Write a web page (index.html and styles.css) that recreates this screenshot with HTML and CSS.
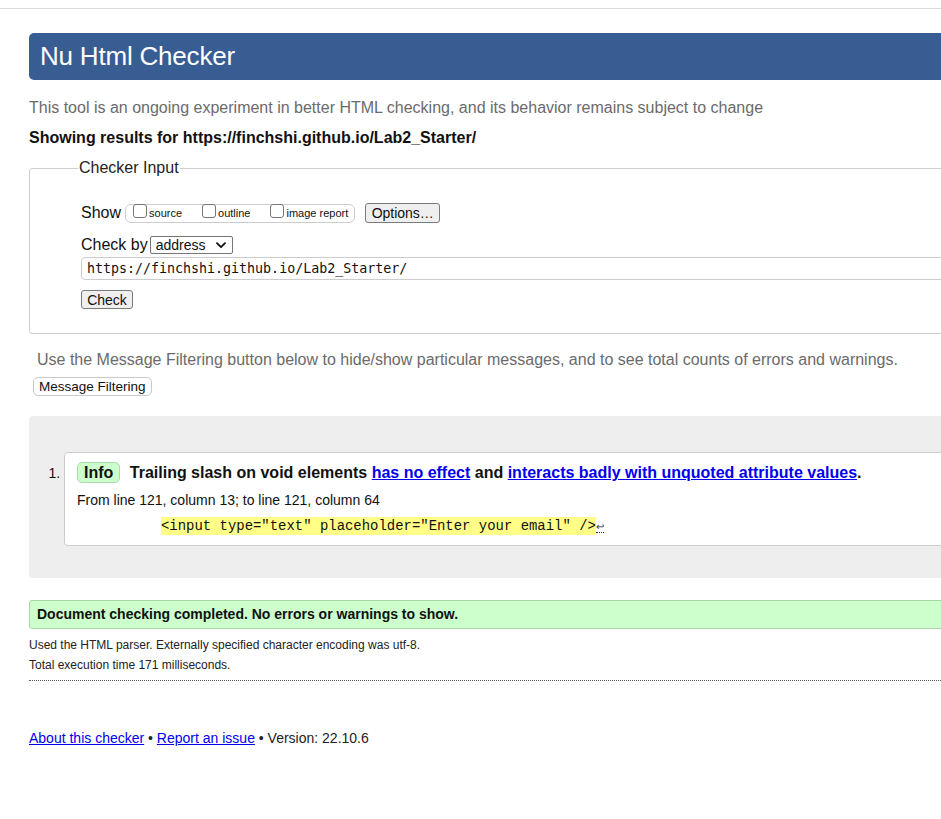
FILE: index.html
```html
<!DOCTYPE html>
<html lang="en">
<head>
<meta charset="utf-8">
<title>Nu Html Checker</title>
<link rel="stylesheet" href="styles.css">
</head>
<body>
<div class="topline"></div>
<div class="page">
  <h1 class="banner">Nu Html Checker</h1>
  <p class="intro">This tool is an ongoing experiment in better HTML checking, and its behavior remains subject to change</p>
  <p class="showing">Showing results for https://finchshi.github.io/Lab2_Starter/</p>

  <fieldset class="input">
    <legend class="legend">Checker Input</legend>
    <div class="rows">
      <div class="row">
        <span class="label">Show</span>
        <span class="showbox">
          <span class="opt"><span class="cb"></span>source</span>
          <span class="opt"><span class="cb"></span>outline</span>
          <span class="opt"><span class="cb"></span>image report</span>
        </span>
        <span class="btn btn-options">Options…</span>
      </div>
      <div class="row row-by">
        <span class="label">Check by</span>
        <span class="select">address
          <svg class="chev" width="10" height="7" viewBox="0 0 10 7"><path d="M1 1.2 L5 5.2 L9 1.2" fill="none" stroke="#111" stroke-width="1.8" stroke-linecap="round" stroke-linejoin="round"/></svg>
        </span>
      </div>
      <div class="url">https://finchshi.github.io/Lab2_Starter/</div>
      <span class="btn btn-check">Check</span>
    </div>
  </fieldset>

  <p class="filter-note">Use the Message Filtering button below to hide/show particular messages, and to see total counts of errors and warnings.</p>
  <span class="btn-filter">Message Filtering</span>

  <div class="results">
    <ol class="msgs">
      <li class="msg">
        <p class="msg-title"><span class="badge">Info</span> Trailing slash on void elements <a href="#">has no effect</a> and <a href="#">interacts badly with unquoted attribute values</a>.</p>
        <p class="loc">From line 121, column 13; to line 121, column 64</p>
        <p class="extract"><code class="hl">&lt;input type="text" placeholder="Enter your email" /&gt;</code><span class="lf">↩</span></p>
      </li>
    </ol>
  </div>

  <p class="success">Document checking completed. No errors or warnings to show.</p>
  <p class="stats">Used the HTML parser. Externally specified character encoding was utf-8.</p>
  <p class="stats">Total execution time 171 milliseconds.</p>
  <div class="dotted"></div>

  <p class="footer"><a href="#">About this checker</a> • <a href="#">Report an issue</a> • Version: 22.10.6</p>
</div>
</body>
</html>
```

FILE: styles.css
```css
html, body {
  margin: 0;
  padding: 0;
  overflow: hidden;
  background: #fff;
}
body {
  font-family: "Liberation Sans", Arial, sans-serif;
  color: #111;
  font-size: 16px;
}
.topline {
  height: 8px;
  border-bottom: 1px solid #dcdcdc;
}
.page {
  margin-left: 29px;
  margin-right: -80px;
}
.banner {
  margin: 24px 0 0;
  height: 47px;
  line-height: 47px;
  background: #385d93;
  color: #fff;
  font-size: 26px;
  font-weight: normal;
  padding-left: 11px;
  border-radius: 5px;
  letter-spacing: -0.2px;
}
.intro {
  margin: 19px 0 0;
  line-height: 18px;
  color: #6b6b6b;
  font-size: 16px;
}
.showing {
  margin: 12px 0 0;
  line-height: 18px;
  font-weight: bold;
  font-size: 16px;
  color: #111;
}
.input {
  margin: 12px 0 0;
  padding: 0 0 24px 0;
  border: 1px solid #cfcfcf;
  border-radius: 3px;
  min-width: 0;
}
.legend {
  margin-left: 48px;
  padding: 0 1px;
  line-height: 18px;
  font-size: 16px;
  color: #222;
}
.rows {
  padding: 26px 0 0 51px;
}
.row {
  display: flex;
  align-items: center;
  height: 20px;
}
.label {
  font-size: 16px;
  color: #111;
  margin-right: 4px;
}
.showbox {
  display: flex;
  align-items: center;
  height: 17px;
  border: 1px solid #cccccc;
  border-radius: 6px;
  padding: 0 6px 0 7px;
  font-size: 11px;
  color: #111;
}
.opt {
  display: flex;
  align-items: center;
  margin-right: 20px;
}
.opt:last-child { margin-right: 0; }
.cb {
  width: 12px;
  height: 12px;
  border: 1px solid #777;
  border-radius: 3px;
  margin-right: 2px;
  background: #fff;
  position: relative;
  top: -2px;
}
.btn {
  display: inline-flex;
  align-items: center;
  justify-content: center;
  box-sizing: border-box;
  background: #efefef;
  border: 1px solid #7a7a7a;
  border-radius: 3px;
  font-size: 14px;
  color: #111;
}
.btn-options {
  margin-left: 10px;
  width: 75px;
  height: 20px;
}
.row-by {
  margin-top: 12px;
  height: 20px;
}
.row-by .label { margin-right: 2px; }
.select {
  display: inline-flex;
  align-items: center;
  justify-content: space-between;
  box-sizing: border-box;
  width: 83px;
  height: 18px;
  border: 1px solid #767676;
  border-radius: 2px;
  padding: 0 6px 0 5px;
  font-size: 14px;
  background: #fff;
}
.url {
  margin-top: 2px;
  box-sizing: border-box;
  height: 23px;
  line-height: 21px;
  border: 1px solid #cccccc;
  border-radius: 4px;
  padding-left: 5px;
  font-family: "DejaVu Sans Mono", monospace;
  font-size: 13.3px;
  color: #111;
}
.btn-check {
  margin-top: 10px;
  width: 52px;
  height: 19px;
  font-size: 14px;
}
.filter-note {
  margin: 17px 0 0 8px;
  line-height: 18px;
  color: #6b6b6b;
  font-size: 16px;
}
.btn-filter {
  display: inline-block;
  margin: 8px 0 0 4px;
  box-sizing: border-box;
  height: 19px;
  line-height: 17px;
  padding: 0 5px;
  border: 1px solid #c9c9c9;
  border-radius: 5px;
  font-size: 13.5px;
  color: #111;
  background: #fff;
}
.results {
  margin-top: 20px;
  background: #eeeeee;
  border-radius: 4px;
  padding: 36px 0 32px;
}
.msgs {
  margin: 0;
  padding-left: 35px;
  font-size: 14px;
}
.msg {
  background: #fff;
  border: 1px solid #cccccc;
  border-radius: 4px;
  padding: 9px 0 10px 12px;
}
.msg::marker {
  font-size: 14px;
}
.msg-title {
  margin: 0;
  font-size: 16px;
  font-weight: bold;
  line-height: 22px;
  color: #111;
}
.badge {
  display: inline-block;
  box-sizing: border-box;
  height: 21px;
  line-height: 19px;
  padding: 0 6px;
  background: #ccffcc;
  border: 1px solid #aadbaa;
  border-radius: 5px;
  margin-right: 5px;
}
.msg-title a {
  color: #0000ee;
  text-decoration: underline;
}
.loc {
  margin: 8px 0 0;
  font-size: 14px;
  line-height: 16px;
  color: #111;
}
.extract {
  margin: 8px 0 0 84px;
  line-height: 18px;
}
.hl {
  background: #ffff88;
  font-family: "Liberation Mono", "Courier New", monospace;
  font-size: 13.95px;
  color: #111;
  line-height: 18px;
  display: inline-block;
}
.lf {
  font-size: 10px;
  color: #333;
  border-bottom: 1px dotted #333;
  line-height: 10px;
  vertical-align: 0;
}
.success {
  margin: 22px 0 0;
  box-sizing: border-box;
  height: 29px;
  line-height: 27px;
  padding-left: 7px;
  background: #ccffcc;
  border: 1px solid #a6d8a6;
  border-radius: 3px;
  font-size: 14px;
  font-weight: bold;
  color: #111;
}
.stats {
  margin: 9px 0 0;
  font-size: 12px;
  line-height: 14px;
  color: #222;
}
.stats + .stats {
  margin-top: 6px;
}
.dotted {
  margin-top: 8px;
  border-top: 1px dotted #555;
}
.footer {
  margin: 49px 0 0;
  font-size: 14px;
  line-height: 16px;
  color: #222;
}
.footer a {
  color: #0000ee;
  text-decoration: underline;
}
```
